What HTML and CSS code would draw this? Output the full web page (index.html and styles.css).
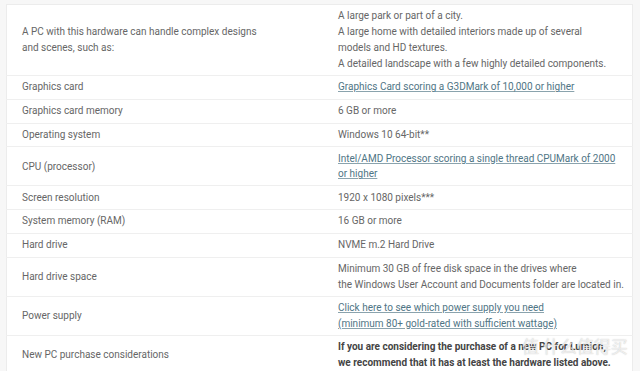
FILE: index.html
```html
<!DOCTYPE html>
<html>
<head>
<meta charset="utf-8">
<link rel="stylesheet" href="styles.css">
</head>
<body>
<div class="wrap">
<table class="spec">
  <tr class="first">
    <td class="label">A PC with this hardware can handle complex designs<br>and scenes, such as:</td>
    <td class="value">A large park or part of a city.<br>A large home with detailed interiors made up of several<br>models and HD textures.<br>A detailed landscape with a few highly detailed components.</td>
  </tr>
  <tr>
    <td class="label">Graphics card</td>
    <td class="value"><a href="#">Graphics Card scoring a G3DMark of 10,000 or higher</a></td>
  </tr>
  <tr>
    <td class="label">Graphics card memory</td>
    <td class="value">6 GB or more</td>
  </tr>
  <tr>
    <td class="label">Operating system</td>
    <td class="value">Windows 10 64-bit**</td>
  </tr>
  <tr class="two">
    <td class="label">CPU (processor)</td>
    <td class="value"><a href="#">Intel/AMD Processor scoring a single thread CPUMark of 2000<br>or higher</a></td>
  </tr>
  <tr>
    <td class="label">Screen resolution</td>
    <td class="value">1920 x 1080 pixels***</td>
  </tr>
  <tr>
    <td class="label">System memory (RAM)</td>
    <td class="value">16 GB or more</td>
  </tr>
  <tr>
    <td class="label">Hard drive</td>
    <td class="value">NVME m.2 Hard Drive</td>
  </tr>
  <tr class="two">
    <td class="label">Hard drive space</td>
    <td class="value">Minimum 30 GB of free disk space in the drives where<br>the Windows User Account and Documents folder are located in.</td>
  </tr>
  <tr class="two">
    <td class="label">Power supply</td>
    <td class="value"><a href="#">Click here to see which power supply you need<br>(minimum 80+ gold-rated with sufficient wattage)</a></td>
  </tr>
  <tr class="two">
    <td class="label">New PC purchase considerations</td>
    <td class="value strong">If you are considering the purchase of a new PC for Lumion,<br>we recommend that it has at least the hardware listed above.</td>
  </tr>
</table>
<div class="watermark">值 什么值得买</div>
</div>
</body>
</html>
```

FILE: styles.css
```css
html, body {
  margin: 0;
  padding: 0;
  background: #f7f7f7;
  overflow: hidden;
}
body {
  font-family: Roboto, "Noto Sans", "Liberation Sans", sans-serif;
  font-size: 10px;
  color: #666;
}
.wrap {
  position: relative;
  padding: 4px 0 0 6px;
  height: 367px;
}
.spec {
  width: 627px;
  table-layout: fixed;
  border-collapse: collapse;
  background: #fff;
  border: 1px solid #ececec;
}
.spec td {
  padding: 3.4px 0;
  line-height: 16px;
  vertical-align: middle;
  border-bottom: 1px solid #efefef;
}
.spec tr.first td {
  padding-top: 3px;
  padding-bottom: 3px;
}
.spec tr.two td {
  line-height: 15.6px;
}
.spec td.label {
  width: 316px;
  padding-left: 15px;
}
.spec td.value {
  padding-left: 0;
}
.spec a {
  color: #4f7585;
  text-decoration: underline;
  text-decoration-color: #8aa3ad;
}
.spec .strong {
  font-weight: 700;
  color: #444;
}
.watermark {
  position: absolute;
  left: 522px;
  top: 336px;
  font-family: "Noto Sans CJK SC", sans-serif;
  font-size: 17px;
  line-height: 20px;
  color: rgba(255, 255, 255, 0.7);
  text-shadow: 0 0 1px rgba(120, 120, 120, 0.5);
  white-space: nowrap;
}
```
